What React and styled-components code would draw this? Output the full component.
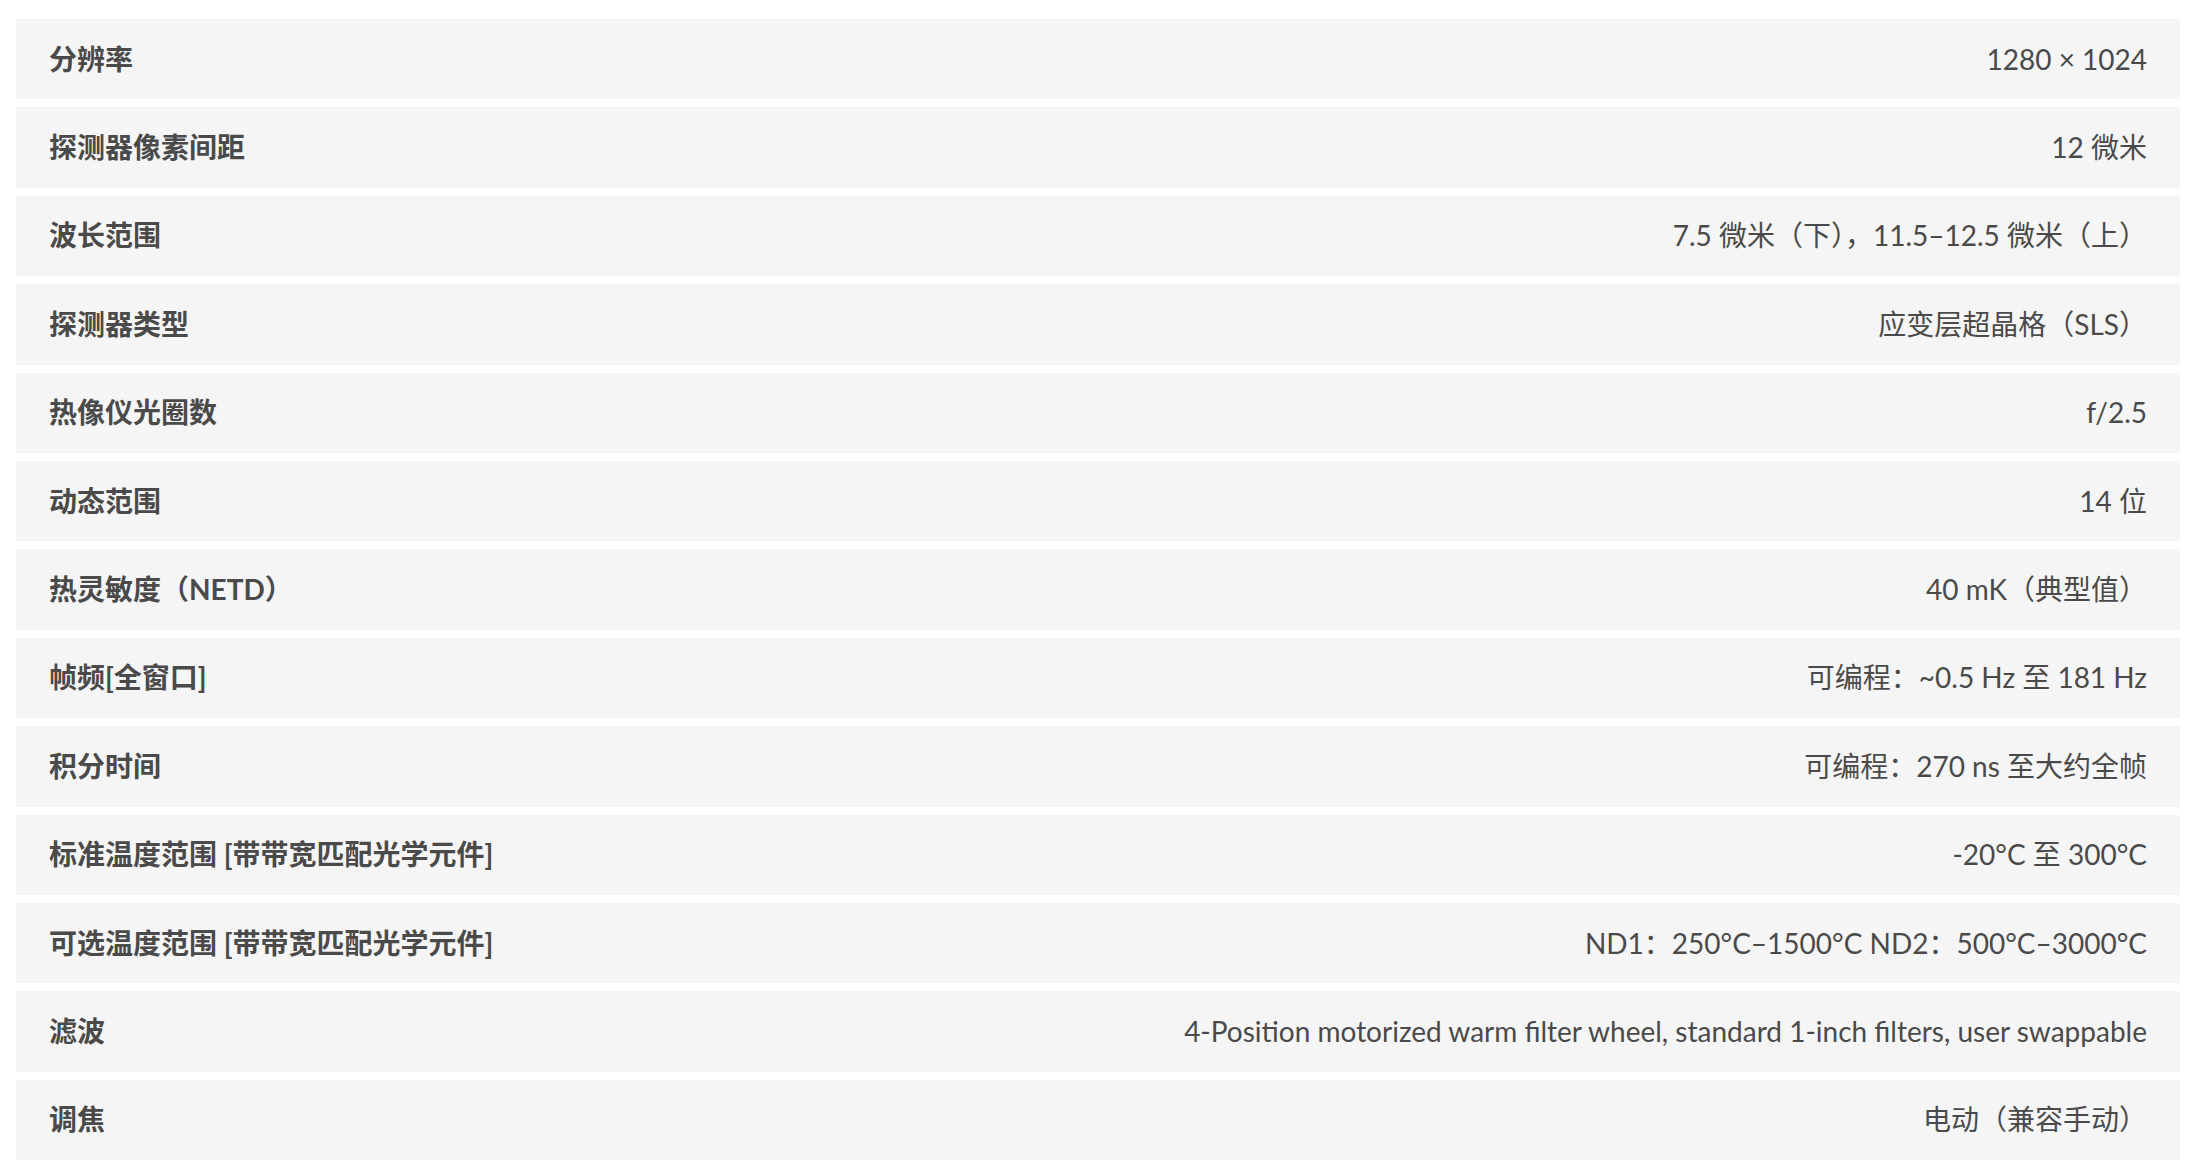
import React from 'react';
import styled, { createGlobalStyle } from "styled-components";

const GlobalStyle = createGlobalStyle`
  html, body {
    margin: 0;
    padding: 0;
    background: #ffffff;
  }
  body {
    font-family: Lato, "Noto Sans CJK SC", sans-serif;
    color: #4a4a4a;
  }
`;

const SpecList = styled.ul`
  list-style: none;
  margin: 0;
  padding: 19px 16px 14px;
  display: flex;
  flex-direction: column;
  gap: 8px;
`;

const SpecRow = styled.li`
  display: flex;
  align-items: center;
  justify-content: space-between;
  height: 80.4px;
  padding: 0 33px;
  background: #f5f5f5;
  font-size: 28px;
  line-height: 1.4;
`;

const Label = styled.span`
  font-weight: 700;
  color: #4a4a4a;
  white-space: nowrap;
`;

const Value = styled.span`
  font-weight: 400;
  color: #4a4a4a;
  text-align: right;
  white-space: nowrap;
`;

const specs = [
  ["分辨率", "1280 × 1024"],
  ["探测器像素间距", "12 微米"],
  ["波长范围", "7.5 微米（下），11.5–12.5 微米（上）"],
  ["探测器类型", "应变层超晶格（SLS）"],
  ["热像仪光圈数", "f/2.5"],
  ["动态范围", "14 位"],
  ["热灵敏度（NETD）", "40 mK（典型值）"],
  ["帧频[全窗口]", "可编程：~0.5 Hz 至 181 Hz"],
  ["积分时间", "可编程：270 ns 至大约全帧"],
  ["标准温度范围 [带带宽匹配光学元件]", "-20°C 至 300°C"],
  ["可选温度范围 [带带宽匹配光学元件]", "ND1：250°C–1500°C ND2：500°C–3000°C"],
  ["滤波", "4-Position motorized warm filter wheel, standard 1-inch filters, user swappable"],
  ["调焦", "电动（兼容手动）"],
];

export default function App() {
  return (
    <>
      <GlobalStyle />
      <SpecList>
        {specs.map(([label, value]) => (
          <SpecRow key={label}>
            <Label>{label}</Label>
            <Value>{value}</Value>
          </SpecRow>
        ))}
      </SpecList>
    </>
  );
}
